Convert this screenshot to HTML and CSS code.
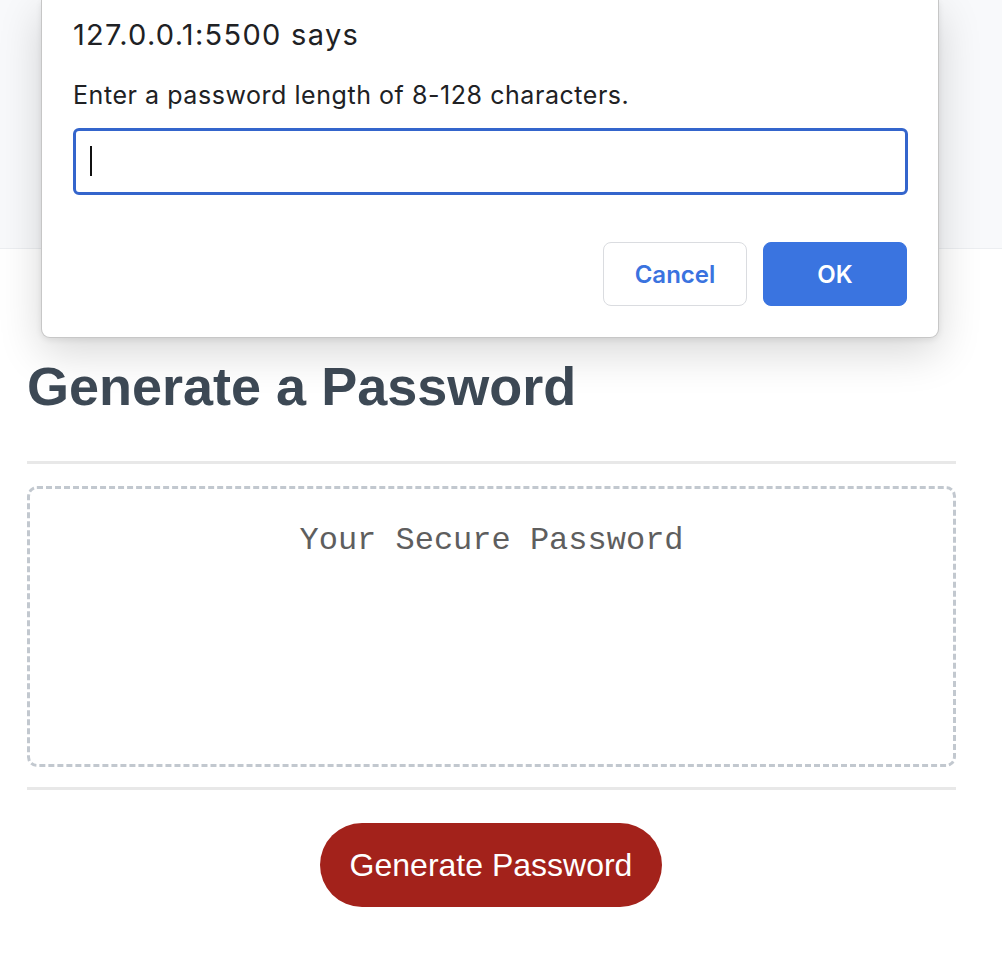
FILE: index.html
```html
<!DOCTYPE html>
<html lang="en">
<head>
<meta charset="utf-8">
<title>Password Generator</title>
<link rel="stylesheet" href="styles.css">
</head>
<body>
  <header class="top-band"></header>
  <main class="content">
    <h2 class="title">Generate a Password</h2>
    <hr class="rule">
    <div class="output">
      <textarea class="password" readonly placeholder="Your Secure Password"></textarea>
    </div>
    <hr class="rule">
    <div class="actions">
      <button class="generate" type="button">Generate Password</button>
    </div>
  </main>

  <div class="dialog" role="dialog">
    <div class="dialog-title">127.0.0.1:5500 says</div>
    <div class="dialog-message">Enter a password length of 8-128 characters.</div>
    <div class="dialog-input"><span class="caret"></span></div>
    <div class="dialog-buttons">
      <button class="btn-cancel" type="button">Cancel</button>
      <button class="btn-ok" type="button">OK</button>
    </div>
  </div>
</body>
</html>
```

FILE: styles.css
```css
* {
  box-sizing: border-box;
}

html, body {
  margin: 0;
  padding: 0;
  background: #ffffff;
}

body {
  font-family: "Liberation Sans", Arial, sans-serif;
  width: 1002px;
  height: 956px;
  overflow: hidden;
  position: relative;
}

.top-band {
  height: 249px;
  background: #f8f9fb;
  border-bottom: 1px solid #eceef1;
}

.content {
  padding: 0 46px 0 26px;
}

.title {
  margin: 105px 0 0 1px;
  font-family: "Liberation Sans", Arial, sans-serif;
  font-weight: bold;
  font-size: 54px;
  line-height: 64px;
  letter-spacing: 0;
  color: #3d4955;
}

.rule {
  margin: 43px 0 0 1px;
  border: none;
  height: 3px;
  background: #e8e8e8;
}

.output {
  margin-top: 22px;
  margin-left: 1px;
}

.password {
  display: block;
  width: 100%;
  height: 281px;
  border: 3px dashed #c2c8cf;
  border-radius: 10px;
  padding: 33px 20px 0;
  resize: none;
  overflow: hidden;
  text-align: center;
  font-family: "Liberation Mono", "Courier New", monospace;
  font-size: 32px;
  line-height: 38px;
  color: #5e5e5e;
  background: #ffffff;
  outline: none;
}

.password::placeholder {
  color: #5e5e5e;
  opacity: 1;
}

.output + .rule {
  margin-top: 20px;
}

.actions {
  display: flex;
  justify-content: center;
  margin-top: 33px;
}

.generate {
  height: 84px;
  width: 342px;
  border: none;
  border-radius: 42px;
  background: #a3221b;
  color: #ffffff;
  font-family: "Liberation Sans", Arial, sans-serif;
  font-size: 32px;
  padding: 0;
  cursor: pointer;
}

/* Browser prompt dialog overlay */
.dialog {
  position: absolute;
  left: 41px;
  top: 0;
  width: 898px;
  background: #ffffff;
  border: 1px solid rgba(0, 0, 0, 0.22);
  border-top: none;
  border-radius: 0 0 9px 9px;
  box-shadow: 0 14px 44px rgba(0, 0, 0, 0.16), 0 2px 6px rgba(0, 0, 0, 0.08);
  padding: 18px 30px 31px 31px;
  font-family: Inter, "Noto Sans", sans-serif;
  color: #202124;
}

.dialog-title {
  font-size: 29px;
  line-height: 34px;
  letter-spacing: 1.3px;
}

.dialog-message {
  margin-top: 28px;
  font-size: 25px;
  line-height: 30px;
  letter-spacing: 0.55px;
}

.dialog-input {
  margin-top: 18px;
  height: 67px;
  border: 3px solid #3465cc;
  border-radius: 6px;
  padding: 15px 0 0 14px;
}

.caret {
  display: block;
  width: 2px;
  height: 30px;
  background: #111111;
}

.dialog-buttons {
  margin-top: 47px;
  margin-right: 1px;
  display: flex;
  justify-content: flex-end;
  gap: 16px;
}

.dialog-buttons button {
  width: 144px;
  height: 64px;
  border-radius: 8px;
  font-family: Inter, "Noto Sans", sans-serif;
  font-weight: 600;
  font-size: 24px;
  padding: 0;
  cursor: pointer;
}

.btn-cancel {
  background: #ffffff;
  border: 1px solid #dadce0;
  color: #3a73df;
}

.btn-ok {
  background: #3a74e0;
  border: 1px solid #3a74e0;
  color: #ffffff;
}
```
